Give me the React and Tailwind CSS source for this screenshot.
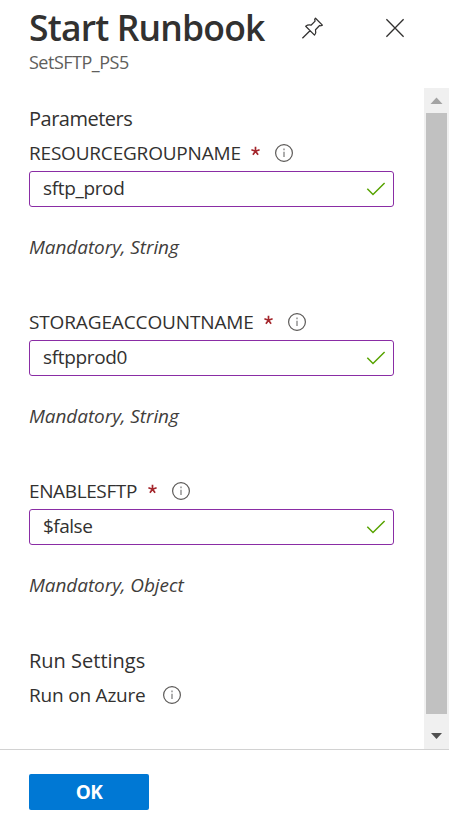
function Info() {
  return (
    <svg className="block h-5 w-5 shrink-0" viewBox="0 0 20 20" fill="none">
      <circle cx="10" cy="10" r="8.4" stroke="#5c5a58" strokeWidth="1.2" />
      <path d="M10 8.8V14M10 5.6V7.2" stroke="#777" strokeWidth="1.2" />
    </svg>
  );
}

function Field({ label, labelClass, value, valueClass, type, typeClass }) {
  return (
    <section>
      <div className="flex h-7 items-center whitespace-nowrap">
        <label className={`block shrink-0 text-[19px] leading-7 ${labelClass}`}>{label}</label>
        <svg className="block h-5 w-[11px] shrink-0" viewBox="0 0 11 20" fill="none">
          <path d="M5.5 3.7V8.2M5.5 8.2L1.4 6.8M5.5 8.2L9.6 6.8M5.5 8.2L2.9 11.7M5.5 8.2L8.1 11.7" stroke="#a4262c" strokeWidth="1.7" />
        </svg>
        <span className="ml-[13px]"><Info /></span>
      </div>
      <div className="mt-1 flex h-9 w-[365px] items-center justify-between rounded-[3px] border border-[#8a2da5] pr-[7px] pl-[13px]">
        <span className={`-mt-0.5 block text-[19px] leading-7 whitespace-nowrap ${valueClass}`}>{value}</span>
        <svg className="block h-[14px] w-5" viewBox="0 0 20 14" fill="none">
          <path d="M1.3 6.8L7 12.5L18.6 1" stroke="#57a300" strokeWidth="1.5" />
        </svg>
      </div>
      <p className="mt-[26px] text-[19px] leading-7 whitespace-nowrap italic text-[#3f3d3b]">
        <span className={typeClass}>{type}</span>
      </p>
    </section>
  );
}

export default function App() {
  return (
    <div className="flex h-[825px] w-[449px] flex-col overflow-hidden bg-white font-['Open_Sans','Noto_Sans',sans-serif] text-[#323130]">
      <header className="h-[88px] shrink-0 pt-[2px] pl-[29px]">
        <div className="flex h-12 items-center">
          <h1 className="w-[272px] shrink-0 pt-px text-[35.5px] leading-[48px] font-semibold tracking-[-0.83px] whitespace-nowrap">Start Runbook</h1>
          <svg className="mt-1 block h-6 w-6 shrink-0" viewBox="0 0 24 24" fill="none" stroke="#323130" strokeWidth="1.25" strokeLinejoin="round">
            <path d="M14.5 2.2L21.4 9.1L20 9.8L18.6 9.5L14.5 13.7C15.1 15.6 14.8 17.4 13.5 19.1L4.7 10.3C6.3 9.1 8 8.7 10 9.2L14.1 5.1L13.7 3.4ZM9 14.7L1.4 22.3" />
          </svg>
          <svg className="mt-1 ml-[60px] block h-5 w-5 shrink-0" viewBox="0 0 20 20" fill="none">
            <path d="M1.4 1.2L18.6 18.8M18.6 1.2L1.4 18.8" stroke="#323130" strokeWidth="1.3" />
          </svg>
        </div>
        <p className="text-[18px] leading-6 tracking-[-0.5px] text-[#605e5c]">SetSFTP_PS5</p>
      </header>
      <div className="flex h-[661px] shrink-0">
        <main className="w-[424px] shrink-0 pt-[17px] pl-[29px]">
          <h2 className="mb-1.5 text-[20px] leading-7 tracking-[-0.5px]">Parameters</h2>
          <div className="mb-12 flex flex-col gap-[47px]">
            <Field label="RESOURCEGROUPNAME" labelClass="w-[221px] tracking-[-0.2px]" value="sftp_prod" valueClass="tracking-[-0.35px]" type="Mandatory, String" typeClass="tracking-[-0.08px]" />
            <Field label="STORAGEACCOUNTNAME" labelClass="w-[234px] tracking-[-0.13px]" value="sftpprod0" valueClass="tracking-[-0.35px]" type="Mandatory, String" typeClass="tracking-[-0.08px]" />
            <Field label="ENABLESFTP" labelClass="w-[118px] tracking-[-0.38px]" value="$false" valueClass="tracking-[-0.5px]" type="Mandatory, Object" typeClass="tracking-[-0.08px]" />
          </div>
          <h2 className="mb-1.5 text-[20px] leading-7">Run Settings</h2>
          <div className="flex items-center">
            <span className="w-[133px] text-[19px] leading-7 tracking-[-0.2px] whitespace-nowrap">Run on Azure</span>
            <Info />
          </div>
        </main>
        <div className="flex w-[25px] shrink-0 flex-col bg-[#f0f0f0]">
          <svg className="block h-[25px] w-[25px]" viewBox="0 0 25 25"><path d="M12.5 9.5L18.5 16H6.5Z" fill="#a3a3a3" /></svg>
          <div className="ml-[2px] h-[601px] w-[21px] bg-[#c1c1c1]" />
          <svg className="block h-[35px] w-[25px]" viewBox="0 0 25 35"><path d="M7 19H18L12.5 25Z" fill="#505050" /></svg>
        </div>
      </div>
      <footer className="h-[76px] shrink-0 border-t border-[#d2d2d2] pt-6 pl-[29px]">
        <button className="flex h-9 w-[120px] items-center justify-center rounded-[2px] bg-[#0078d4] text-[19px] font-bold tracking-[-0.5px] text-white">OK</button>
      </footer>
    </div>
  );
}
